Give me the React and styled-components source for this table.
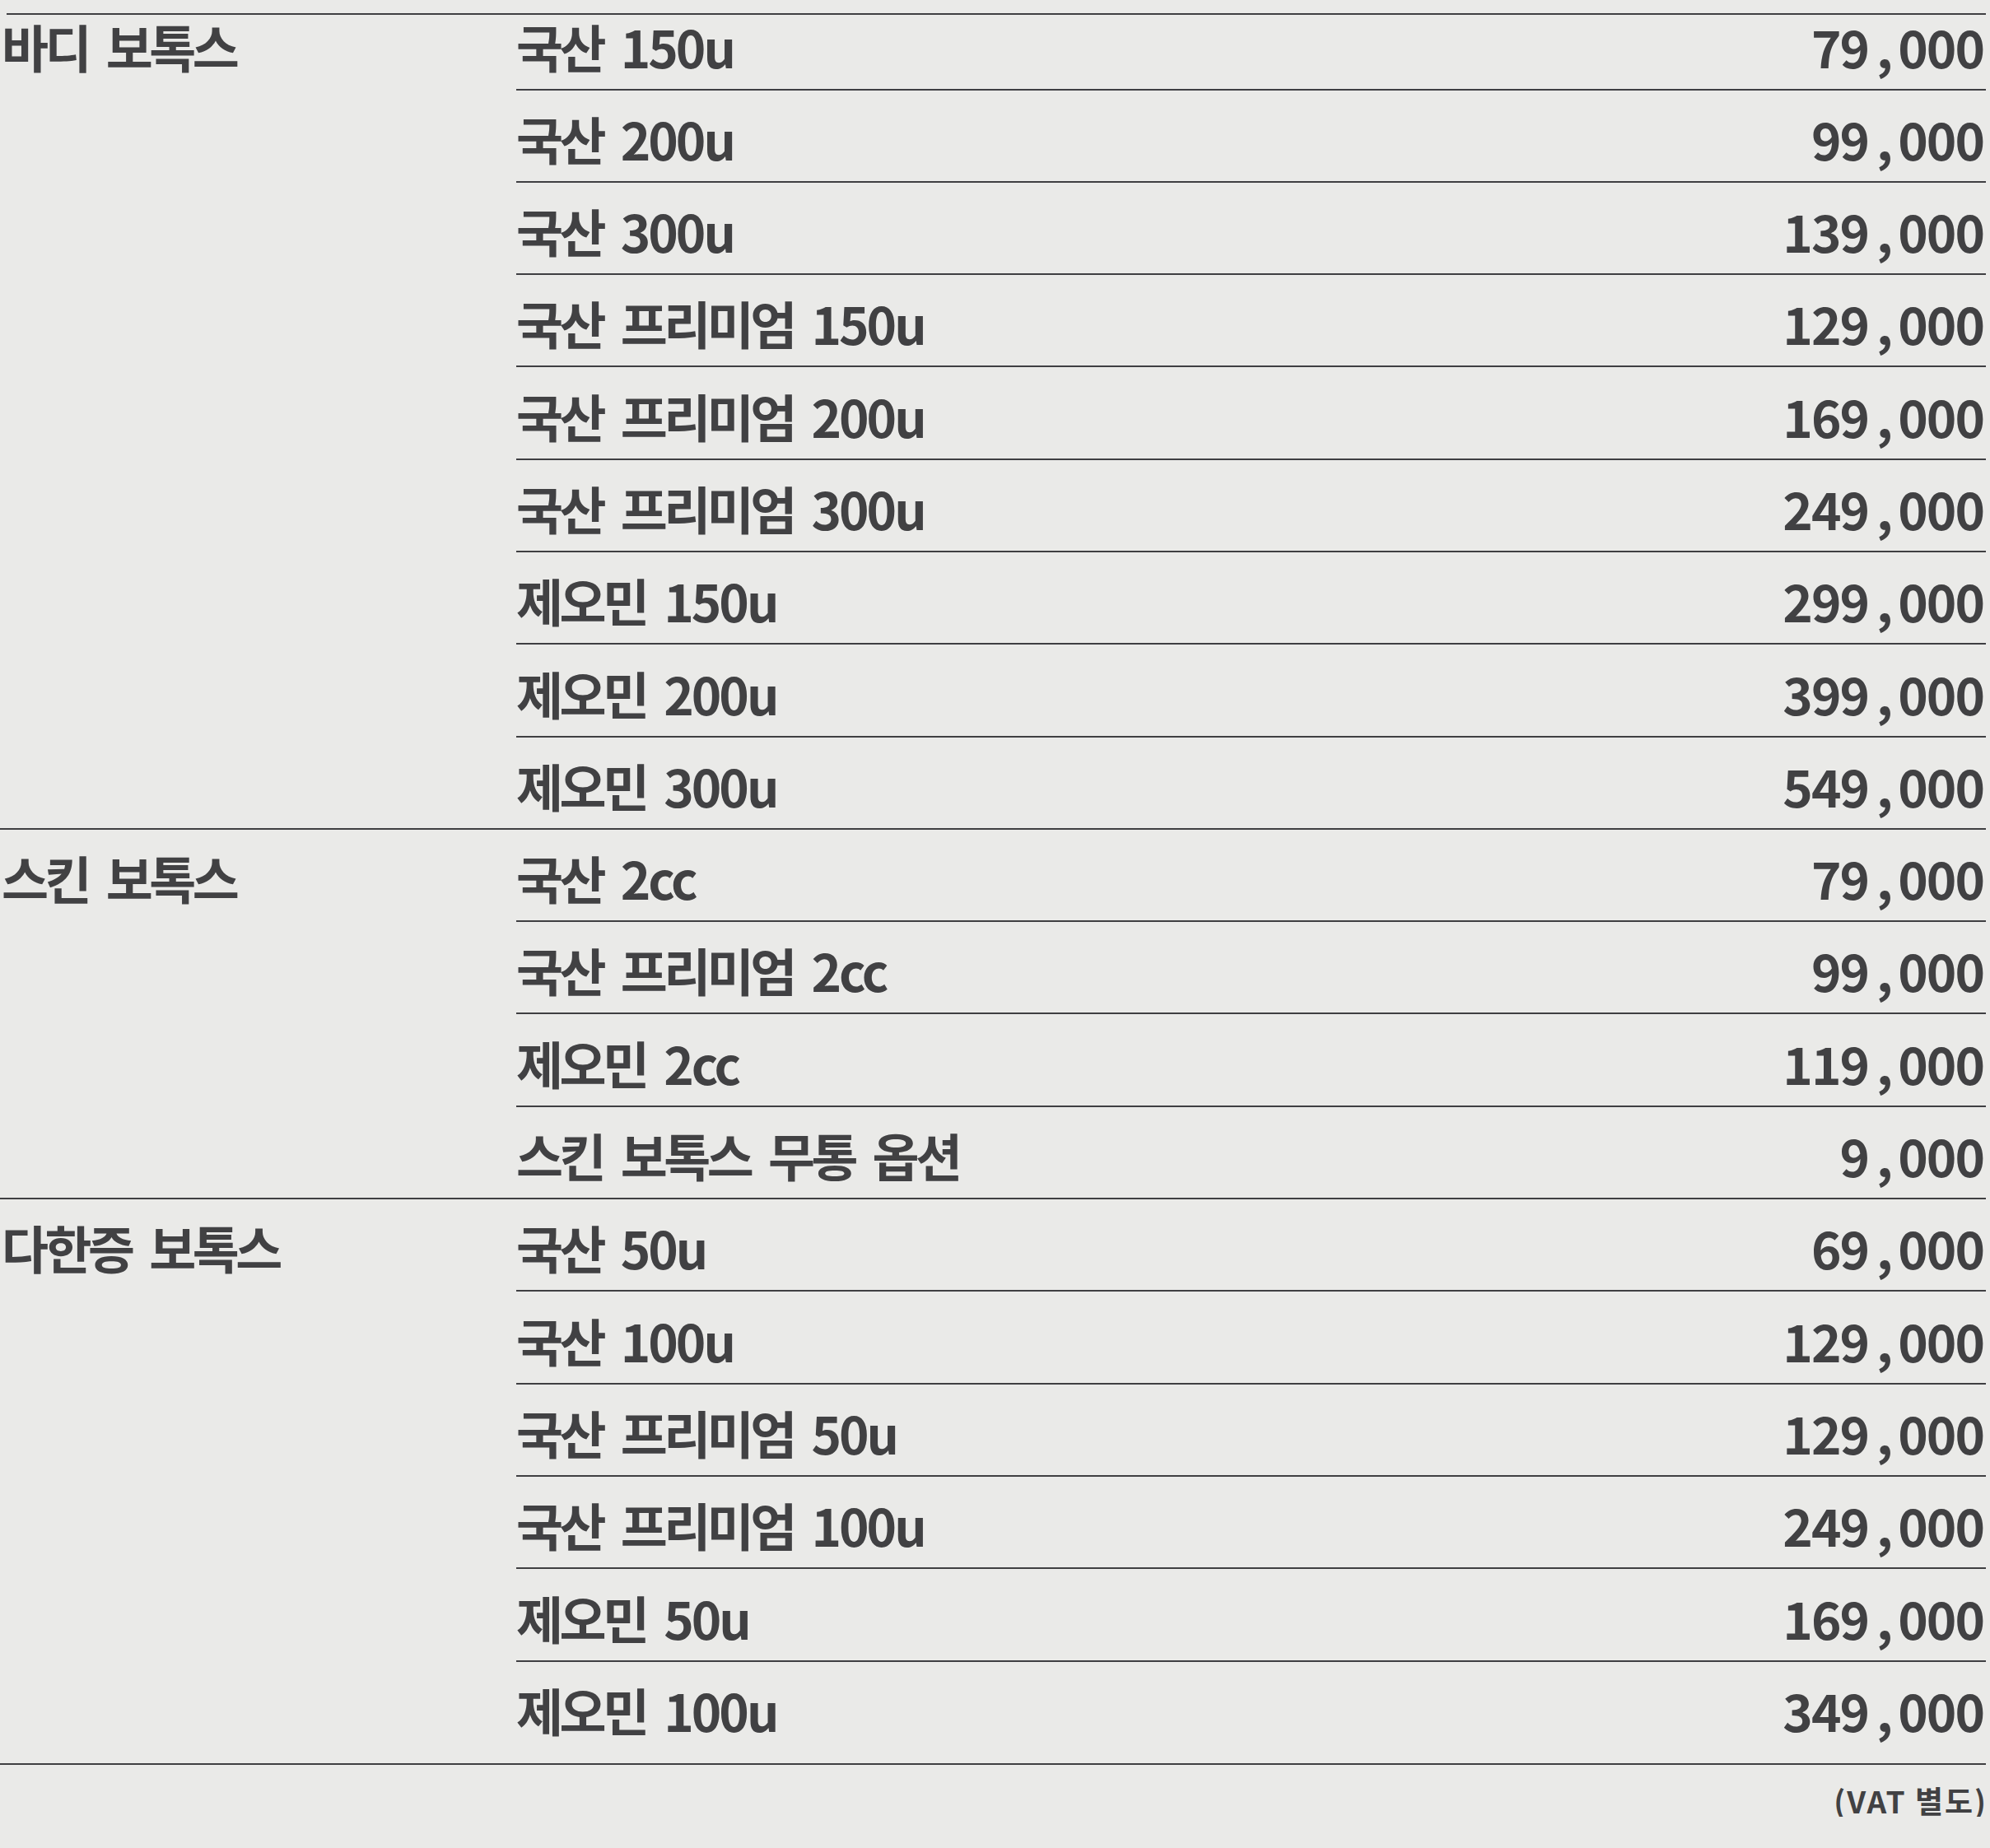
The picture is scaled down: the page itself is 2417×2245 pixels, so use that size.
import styled, { createGlobalStyle } from "styled-components";

const GlobalStyle = createGlobalStyle`
    html, body {
        margin: 0;
        padding: 0;
        background: #eaeae8;
    }
    body {
        font-family: "Noto Sans CJK KR", "Noto Sans", sans-serif;
        color: #414143;
    }
`

const sections = [
    {
        title: '바디 보톡스',
        items: [
            ['국산 150u', '79,000'],
            ['국산 200u', '99,000'],
            ['국산 300u', '139,000'],
            ['국산 프리미엄 150u', '129,000'],
            ['국산 프리미엄 200u', '169,000'],
            ['국산 프리미엄 300u', '249,000'],
            ['제오민 150u', '299,000'],
            ['제오민 200u', '399,000'],
            ['제오민 300u', '549,000'],
        ],
    },
    {
        title: '스킨 보톡스',
        items: [
            ['국산 2cc', '79,000'],
            ['국산 프리미엄 2cc', '99,000'],
            ['제오민 2cc', '119,000'],
            ['스킨 보톡스 무통 옵션', '9,000'],
        ],
    },
    {
        title: '다한증 보톡스',
        items: [
            ['국산 50u', '69,000'],
            ['국산 100u', '129,000'],
            ['국산 프리미엄 50u', '129,000'],
            ['국산 프리미엄 100u', '249,000'],
            ['제오민 50u', '169,000'],
            ['제오민 100u', '349,000'],
        ],
    },
]

const Page = styled.div`
    width: 2412px;
    padding-top: 16px;
`

const TopRule = styled.div`
    height: 2px;
    margin-left: 8px;
    background: #3f3f42;
`

const Section = styled.section`
    display: grid;
    grid-template-columns: 627px 1fr;
    border-bottom: 2px solid #3f3f42;
`

const Category = styled.div`
    font-size: 62px;
    font-weight: 700;
    line-height: 68px;
    letter-spacing: -3px;
    word-spacing: 6px;
    padding-top: ${({ first }) => (first ? '3.5px' : '24.3px')};
    padding-left: 2px;
`

const Items = styled.div`
    display: flex;
    flex-direction: column;
`

const Item = styled.div`
    display: flex;
    justify-content: space-between;
    align-items: center;
    font-size: 62px;
    font-weight: 700;
    line-height: 68px;
    padding: ${({ first }) => (first ? '3.5px' : '24.3px')} 3px 18px 0;
    padding-bottom: ${({ last }) => (last ? '31px' : '18px')};
    border-bottom: ${({ end }) => (end ? 'none' : '2px solid #3f3f42')};
`

const Label = styled.span`
    letter-spacing: -3px;
    word-spacing: 6px;
`

const Hangul = styled.span`
    letter-spacing: -4.5px;
    margin-right: 4.5px;
`

const Price = styled.span`
    letter-spacing: -2px;
    font-variant-numeric: tabular-nums;
`

const Comma = styled.span`
    margin: 0 8px 0 10px;
`

const Note = styled.div`
    text-align: right;
    font-size: 37px;
    font-weight: 700;
    line-height: 40px;
    margin-top: 23px;
    letter-spacing: 2px;
    margin-right: -2px;
`

const renderLabel = (text) =>
    text.split(/([가-힣]+)/).filter(Boolean).map((part, i) =>
        /[가-힣]/.test(part) ? <Hangul key={i}>{part}</Hangul> : part
    )

const renderPrice = (text) => {
    const [head, tail] = text.split(',')
    return (
        <>
            {head}<Comma>,</Comma>{tail}
        </>
    )
}

export default function App() {
    return (
        <>
            <GlobalStyle />
            <Page>
                <TopRule />
                {sections.map((section, s) => (
                    <Section key={section.title}>
                        <Category first={s === 0}>{renderLabel(section.title)}</Category>
                        <Items>
                            {section.items.map(([name, price], i) => (
                                <Item
                                    key={name}
                                    first={s === 0 && i === 0}
                                    end={i === section.items.length - 1}
                                    last={s === sections.length - 1 && i === section.items.length - 1}
                                >
                                    <Label>{renderLabel(name)}</Label>
                                    <Price>{renderPrice(price)}</Price>
                                </Item>
                            ))}
                        </Items>
                    </Section>
                ))}
                <Note>(VAT 별도)</Note>
            </Page>
        </>
    )
}
